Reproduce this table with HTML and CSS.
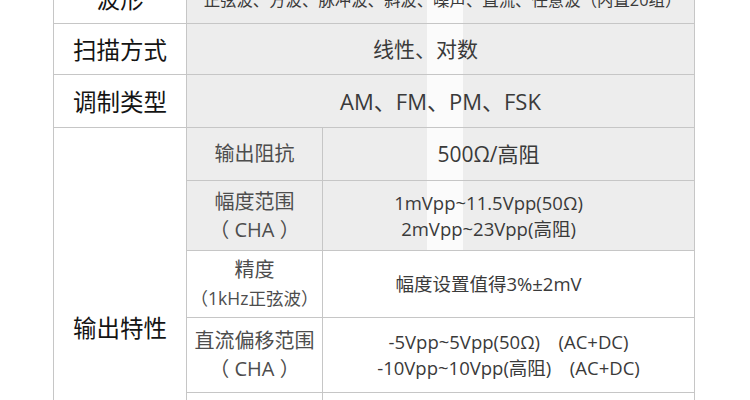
FILE: index.html
```html
<!DOCTYPE html>
<html lang="zh-CN">
<head>
<meta charset="utf-8">
<title>规格参数</title>
<link rel="stylesheet" href="styles.css">
</head>
<body>
<table class="spec">
  <colgroup>
    <col class="col-name">
    <col class="col-sub">
    <col class="col-val">
  </colgroup>
  <tr class="row-wave">
    <th class="name">波形</th>
    <td class="val shade wide" colspan="2">正弦波、方波、脉冲波、斜波、噪声、直流、任意波（内置20组）</td>
  </tr>
  <tr class="row-sweep">
    <th class="name">扫描方式</th>
    <td class="val shade big sweep" colspan="2">线性、对数</td>
  </tr>
  <tr class="row-mod">
    <th class="name">调制类型</th>
    <td class="val shade big mod" colspan="2">AM、FM、PM、FSK</td>
  </tr>
  <tr class="row-imp">
    <th class="name" rowspan="6">输出特性</th>
    <td class="sub shade">输出阻抗</td>
    <td class="val shade big inset">500Ω/高阻</td>
  </tr>
  <tr class="row-amp">
    <td class="sub shade">幅度范围<br>（ CHA ）</td>
    <td class="val shade inset">1mVpp~11.5Vpp(50Ω)<br>2mVpp~23Vpp(高阻)</td>
  </tr>
  <tr class="row-acc">
    <td class="sub">精度<br><span class="note">（1kHz正弦波）</span></td>
    <td class="val inset">幅度设置值得3%±2mV</td>
  </tr>
  <tr class="row-dc">
    <td class="sub">直流偏移范围<br>（ CHA ）</td>
    <td class="val">-5Vpp~5Vpp(50Ω)　(AC+DC)<br>-10Vpp~10Vpp(高阻)　(AC+DC)</td>
  </tr>
  <tr class="row-more">
    <td class="sub"></td>
    <td class="val"></td>
  </tr>
  <tr class="row-more">
    <td class="sub"></td>
    <td class="val"></td>
  </tr>
</table>
</body>
</html>
```

FILE: styles.css
```css
html, body {
  margin: 0;
  padding: 0;
  background: #ffffff;
}

.spec {
  border-collapse: collapse;
  table-layout: fixed;
  width: 641px;
  margin: -28px 0 0 53px;
  font-family: "Open Sans", "Noto Sans CJK SC", sans-serif;
}

.col-name { width: 133px; }
.col-sub { width: 136px; }
.col-val { width: 372px; }

.spec th,
.spec td {
  border: 1px solid #c6c6c6;
  padding: 0;
  text-align: center;
  vertical-align: middle;
  background: #ffffff;
}

.spec .shade {
  background: linear-gradient(to right,
    #ededed 0, #ededed 427px,
    #fbfbfb 427px, #fbfbfb 463px,
    #ededed 463px) fixed;
}

.name {
  font-family: "Noto Sans CJK SC", sans-serif;
  font-weight: 400;
  font-size: 23.5px;
  color: #141414;
  padding-right: 8px;
}

.sub {
  font-size: 20px;
  line-height: 28px;
  color: #4d4d4d;
  white-space: nowrap;
}

.sub .note {
  font-size: 17.5px;
  line-height: 22px;
}

.val {
  font-size: 18.5px;
  line-height: 26px;
  color: #3a3a3a;
  white-space: nowrap;
}

.val.big {
  font-size: 21px;
}

.val.mod {
  font-size: 22px;
}

.val.wide {
  font-size: 16.4px;
  padding-top: 4px;
  padding-left: 4px;
}

.val.sweep {
  padding-right: 30px;
}

.val.inset {
  padding-right: 40px;
}

.row-wave th { height: 50px; }
.row-wave td { height: 46px; }
.row-sweep td, .row-sweep th { height: 50px; }
.row-mod td, .row-mod th { height: 52px; }
.row-imp td { height: 52px; }
.row-amp td { height: 69px; }
.row-acc td { height: 66px; }
.row-dc td { height: 74px; }
.row-more td { height: 66px; }
```
